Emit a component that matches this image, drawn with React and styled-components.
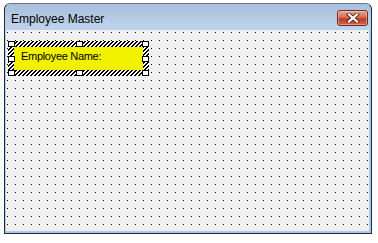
import React from 'react';
import styled, { createGlobalStyle } from 'styled-components';

const GlobalStyle = createGlobalStyle`
  html, body {
    margin: 0;
    padding: 0;
    background: #ffffff;
  }
  body {
    font-family: 'Liberation Sans', Arial, sans-serif;
  }
`;

const Window = styled.div`
  box-sizing: border-box;
  margin: 3px 0 0 4px;
  width: 368px;
  height: 231px;
  border: 1px solid #262b33;
  border-top-color: #6b7480;
  border-radius: 6px 6px 0 0;
  background: linear-gradient(#a6bfdd 0px, #b5cbe6 14px, #c2d6ed 30px, #c4d8ee 100%);
  display: flex;
  flex-direction: column;
`;

const TitleBar = styled.div`
  height: 26px;
  flex: none;
  display: flex;
  align-items: flex-start;
  justify-content: space-between;
  padding: 0 3px 0 6px;
`;

const Title = styled.span`
  margin-top: 8px;
  font-size: 12px;
  line-height: 14px;
  color: #000;
`;

const CloseButton = styled.div`
  box-sizing: border-box;
  margin-top: 6px;
  width: 31px;
  height: 16px;
  border: 1px solid #6e2a22;
  border-radius: 3px;
  background: linear-gradient(#e8a18c 0%, #d96d55 45%, #c23a22 55%, #d0654b 100%);
  box-shadow: inset 0 0 0 1px rgba(255, 255, 255, 0.35);
  display: flex;
  align-items: center;
  justify-content: center;
`;

const Frame = styled.div`
  flex: 1;
  display: flex;
  padding: 0 2px 2px 1px;
  background: #a9c9ea;
`;

const Client = styled.div`
  flex: 1;
  position: relative;
  background-color: #f0f0f0;
  background-image: conic-gradient(from 270deg at 1px 1px, #000 25%, transparent 0);
  background-size: 8px 8px;
  background-position: 1px 2px;
  padding: 11px 0 0 2px;
`;

const Selection = styled.div`
  position: relative;
  box-sizing: border-box;
  width: 141px;
  height: 35px;
  padding: 6px;
  background: repeating-linear-gradient(
    135deg,
    #000 0px,
    #000 1.5px,
    #fff 1.5px,
    #fff 2.83px
  );
`;

const Handle = styled.div`
  position: absolute;
  box-sizing: border-box;
  width: 7px;
  height: 6px;
  background: #fff;
  border: 1px solid #000;
  left: ${(p) => (p.$x === 'l' ? '0' : p.$x === 'r' ? 'auto' : 'calc(50% - 3px)')};
  right: ${(p) => (p.$x === 'r' ? '0' : 'auto')};
  top: ${(p) => (p.$y === 't' ? '0' : p.$y === 'b' ? 'auto' : 'calc(50% - 3px)')};
  bottom: ${(p) => (p.$y === 'b' ? '0' : 'auto')};
`;

const Label = styled.div`
  height: 100%;
  background: #f2f200;
  padding: 3px 0 0 7px;
  box-sizing: border-box;
  font-size: 11px;
  line-height: 13px;
  letter-spacing: -0.3px;
  color: #000;
`;

const handles = [
  ['l', 't'], ['c', 't'], ['r', 't'],
  ['l', 'm'], ['r', 'm'],
  ['l', 'b'], ['c', 'b'], ['r', 'b'],
];

function CloseIcon() {
  return (
    <svg width="14" height="10" viewBox="0 0 14 10">
      <path d="M3 1.5 L11 8.5 M11 1.5 L3 8.5" stroke="#5b2a24" strokeWidth="4" strokeLinecap="square" />
      <path d="M3 1.5 L11 8.5 M11 1.5 L3 8.5" stroke="#ffffff" strokeWidth="2.2" strokeLinecap="square" />
    </svg>
  );
}

export default function App() {
  return (
    <>
      <GlobalStyle />
      <Window>
        <TitleBar>
          <Title>Employee Master</Title>
          <CloseButton>
            <CloseIcon />
          </CloseButton>
        </TitleBar>
        <Frame>
          <Client>
            <Selection>
              <Label>Employee Name:</Label>
              {handles.map(([x, y]) => (
                <Handle key={x + y} $x={x} $y={y} />
              ))}
            </Selection>
          </Client>
        </Frame>
      </Window>
    </>
  );
}
